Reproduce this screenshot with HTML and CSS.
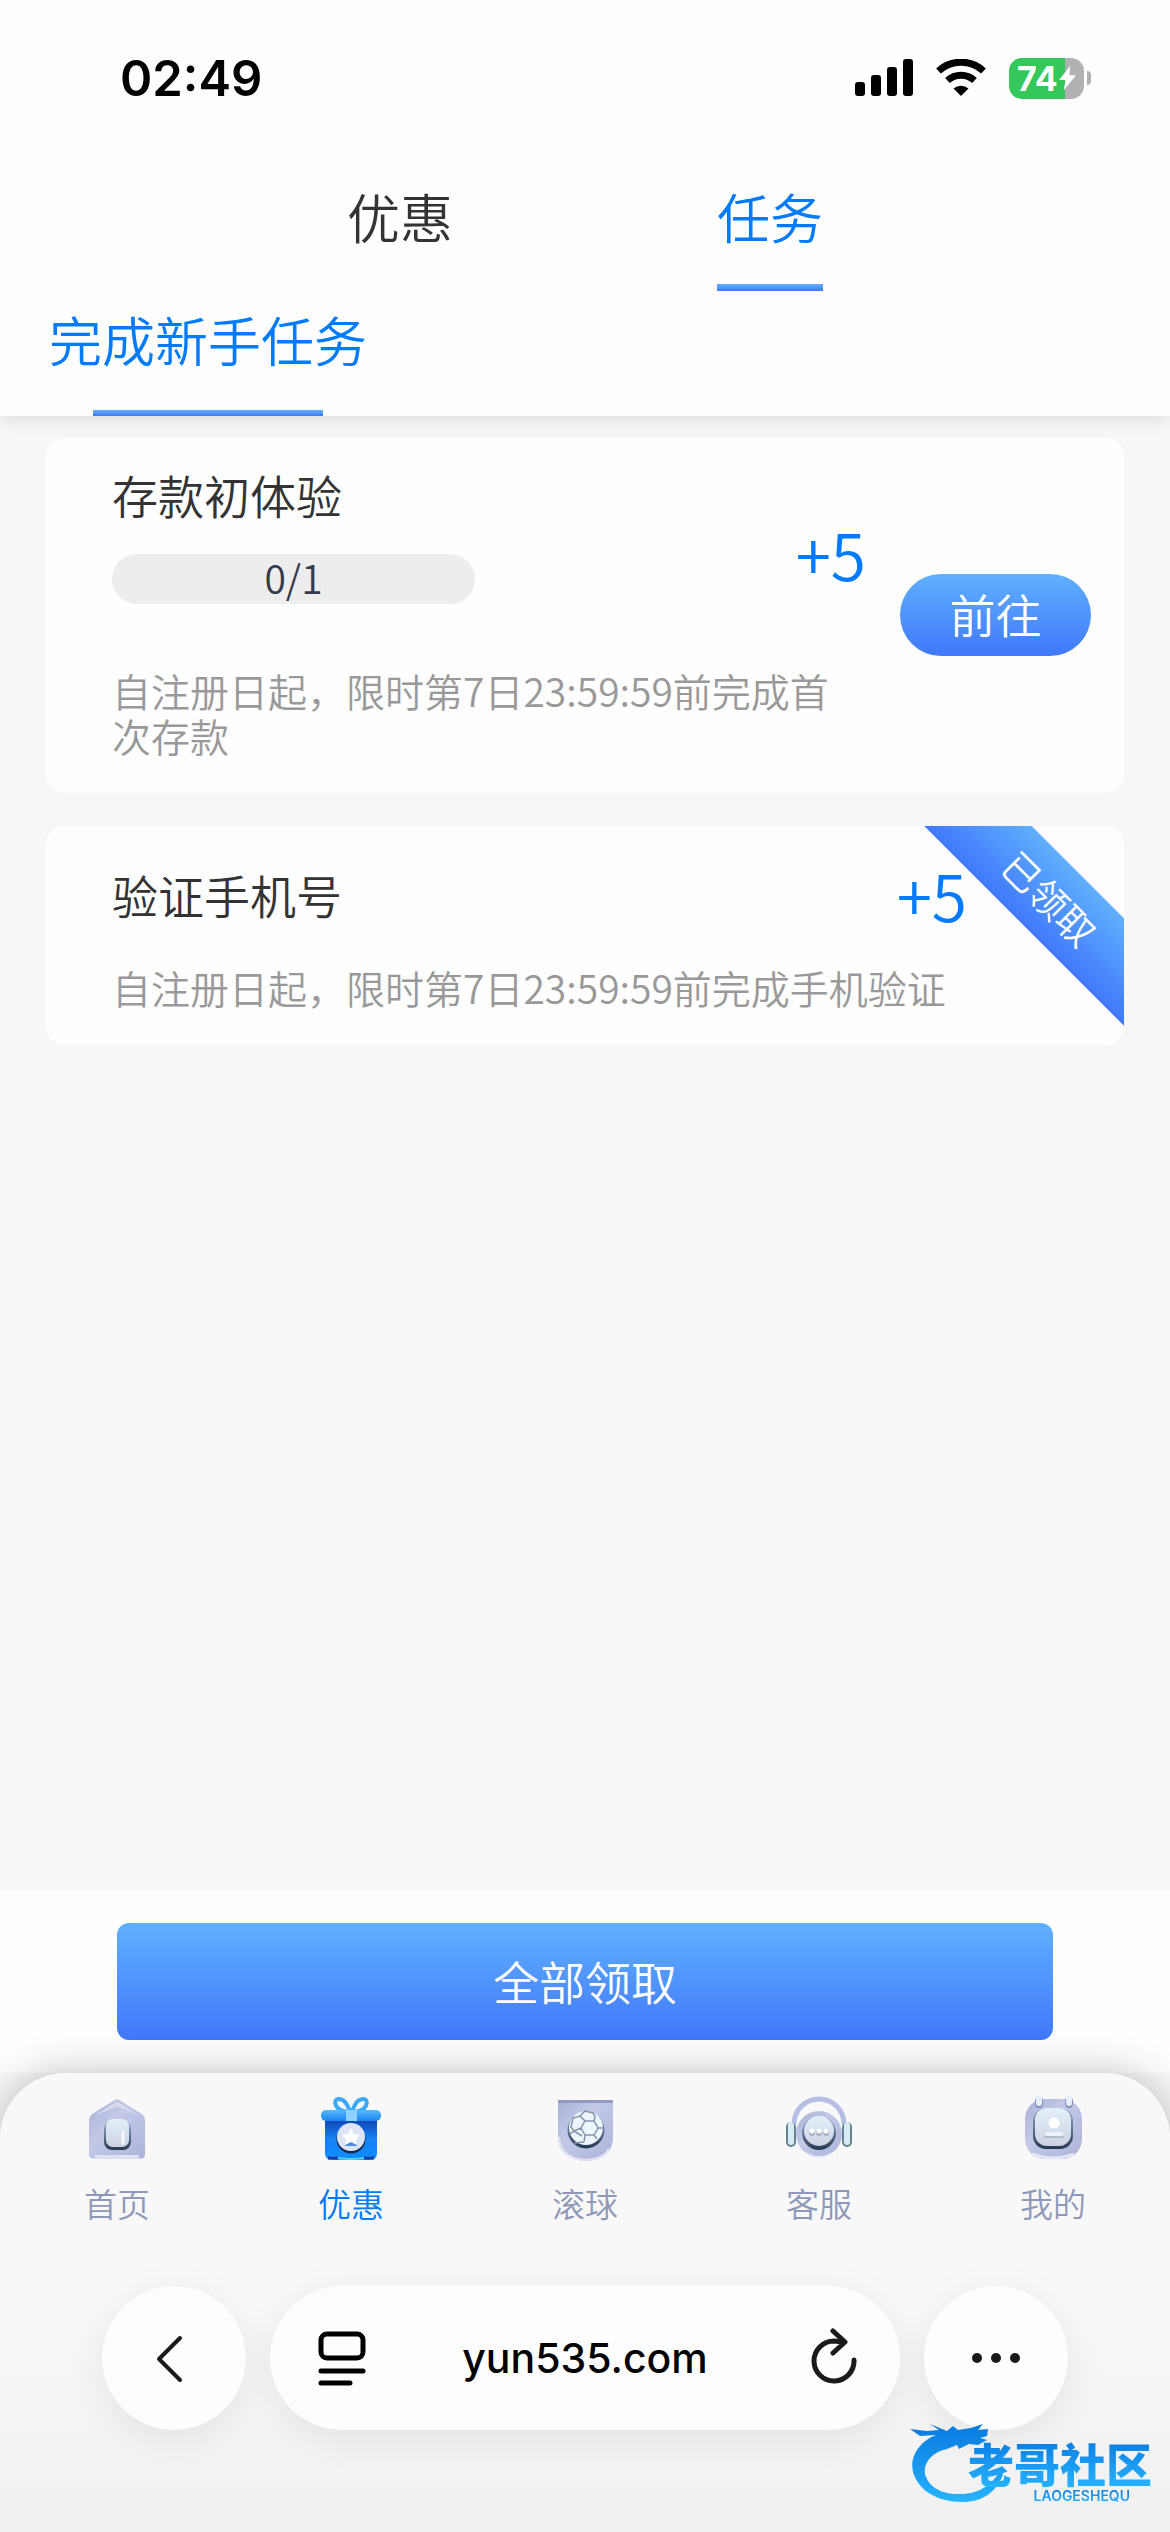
FILE: index.html
```html
<!DOCTYPE html>
<html lang="zh-CN">
<head>
    <meta charset="UTF-8">
    <meta name="viewport" content="width=device-width, initial-scale=1.0">
    <title>任务</title>
    <link rel="stylesheet" href="styles.css">
</head>
<body>
    <header class="top">
        <div class="status">
            <time class="clock">02:49</time>
            <div class="status-icons">
                <svg class="signal" viewBox="0 0 58 38" aria-hidden="true">
                    <rect x="0" y="23" width="10" height="14" rx="3"/>
                    <rect x="16" y="16" width="10" height="21" rx="3"/>
                    <rect x="32" y="8" width="10" height="29" rx="3"/>
                    <rect x="48" y="0" width="10" height="37" rx="3"/>
                </svg>
                <svg class="wifi" viewBox="0 0 52 38" aria-hidden="true">
                    <path d="M26 37l-7.500-7.500a11.500 11.500 0 0 1 15 0z"/>
                    <path d="M12.500 21.500a20 20 0 0 1 27 0M3.500 12a33 33 0 0 1 45 0" fill="none" stroke="#000" stroke-width="7"/>
                </svg>
                <div class="battery">
                    <span class="battery-level">74</span>
                    <svg class="bolt" viewBox="0 0 18 26" aria-hidden="true"><path d="M12 0L0 15h7L5 26 18 10h-7z"/></svg>
                    <span class="battery-tip"></span>
                </div>
            </div>
        </div>
        <nav class="tabs">
            <a class="tab" href="#offers">优惠</a>
            <a class="tab active" href="#tasks">任务</a>
        </nav>
        <nav class="subtabs">
            <a class="subtab" href="#newbie">完成新手任务</a>
        </nav>
    </header>

    <main class="tasks">
        <article class="card card-progress">
            <div class="info">
                <div class="info-head">
                    <div>
                        <h2>存款初体验</h2>
                        <div class="progress">0/1</div>
                    </div>
                    <strong class="reward">+5</strong>
                </div>
                <p>自注册日起，限时第7日23:59:59前完成首次存款</p>
            </div>
            <button class="go" type="button">前往</button>
        </article>
        <article class="card card-done">
            <div class="row">
                <h2>验证手机号</h2>
                <strong class="reward">+5</strong>
            </div>
            <p>自注册日起，限时第7日23:59:59前完成手机验证</p>
            <span class="ribbon">已领取</span>
        </article>
    </main>

    <div class="claim">
        <button class="claim-all" type="button">全部领取</button>
    </div>

    <footer class="bottom">
        <nav class="menu">
            <a href="#home">
                <svg viewBox="0 0 70 70" aria-hidden="true">
                    <defs>
                        <linearGradient id="body" x1="0" y1="0" x2="1" y2="1">
                            <stop offset="0" stop-color="#a9b0d6"/>
                            <stop offset=".4" stop-color="#c3c9e6"/>
                            <stop offset="1" stop-color="#adb2dc"/>
                        </linearGradient>
                        <linearGradient id="glass" x1="0" y1="0" x2="0" y2="1">
                            <stop offset="0" stop-color="#e4f0f9"/>
                            <stop offset="1" stop-color="#ccd2e2"/>
                        </linearGradient>
                        <linearGradient id="edge" x1="0" y1="0" x2="0" y2="1">
                            <stop offset="0" stop-color="#a3b0cf"/>
                            <stop offset="1" stop-color="#26384f"/>
                        </linearGradient>
                        <linearGradient id="blue" x1="0" y1="0" x2="0" y2="1">
                            <stop offset="0" stop-color="#1243b4"/>
                            <stop offset=".5" stop-color="#1683f4"/>
                            <stop offset="1" stop-color="#0d8dff"/>
                        </linearGradient>
                        <linearGradient id="lid" x1="0" y1="0" x2="0" y2="1">
                            <stop offset="0" stop-color="#54baff"/>
                            <stop offset="1" stop-color="#1c86f2"/>
                        </linearGradient>
                    </defs>
                    <path d="M32 5.500q3-2 6 0l21 13q4 2.500 4 7v34q0 4-4 4H11q-4 0-4-4v-34q0-4.500 4-7z" fill="url(#body)"/>
                    <path d="M33 7.500q2-1.500 4 0l20 13-22-9-22 9z" fill="#d5daef"/>
                    <path d="M13 61.500h44" stroke="#dfe2f2" stroke-width="3"/>
                    <rect x="22" y="26" width="27" height="29" rx="8" fill="url(#edge)"/>
                    <rect x="24" y="24" width="23" height="28" rx="7" fill="url(#glass)"/>
                    <path d="M41 37v11" stroke="#f5f8fd" stroke-width="3" stroke-linecap="round"/>
                </svg>
                首页
            </a>
            <a class="active" href="#offers">
                <svg viewBox="0 0 70 70" aria-hidden="true">
                    <path d="M34 17C18 17 16 4 23 4q7 0 11 13M36 17C52 17 54 4 47 4q-7 0-11 13" fill="none" stroke="#3ba8fa" stroke-width="4"/>
                    <path d="M9 24h52v34q0 7-7 7H16q-7 0-7-7z" fill="url(#blue)"/>
                    <path d="M15 62q20 4 40 0" fill="none" stroke="#52d0ff" stroke-width="2"/>
                    <path d="M12 63h10M48 63h10" stroke="#183ca8" stroke-width="3"/>
                    <rect x="5" y="15" width="60" height="11" rx="5" fill="url(#lid)"/>
                    <path d="M30 15h11v11H30z" fill="#8ed3ff"/>
                    <circle cx="35" cy="44" r="14.500" fill="#16294f"/>
                    <circle cx="35" cy="42" r="14" fill="#dde4f5"/>
                    <path d="M30 47l-1 4h12l-1-4z" fill="#4b91dc"/>
                    <path d="M35 33l3 6 6 1-4 4 1 6-6-3-6 3 1-6-4-4 6-1z" fill="#fff"/>
                </svg>
                优惠
            </a>
            <a href="#live">
                <svg viewBox="0 0 70 70" aria-hidden="true">
                    <path d="M8 5h55v37c0 15-11 24-27 24S8 57 8 42z" fill="url(#body)"/>
                    <path d="M8 5h55v3H8z" fill="#9299c2"/>
                    <path d="M9 42c1 15 11 23 27 23 10 0 19-4 23-11" fill="none" stroke="#e4e6f5" stroke-width="2"/>
                    <circle cx="36" cy="35" r="18.500" fill="url(#edge)"/>
                    <circle cx="36" cy="33" r="17" fill="#edf5fd"/>
                    <path d="M35 26h9l4 7-4 7h-9l-4-7zM35 26l-5-5-7 2-2 9 3 4 7-3M30 21l5-5 8 2 2 4-1 4M48 33h5M44 40l3 4M35 40l-1 7M24 36l-4 3M24 36l8 5M24 48l10-1" fill="none" stroke="#8792ac" stroke-width="1.500"/>
                </svg>
                滚球
            </a>
            <a href="#service">
                <svg viewBox="0 0 70 70" aria-hidden="true">
                    <path d="M10 29a25 25 0 0 1 50 0" fill="none" stroke="#b5bee3" stroke-width="5"/>
                    <circle cx="35" cy="39" r="23" fill="url(#body)"/>
                    <path d="M22 58q13 8 26 0" fill="none" stroke="#e6ebf8" stroke-width="2"/>
                    <rect x="2" y="27" width="10" height="25" rx="5" fill="#638491"/>
                    <rect x="4" y="27" width="6" height="23" rx="3" fill="#d9ebf2"/>
                    <rect x="58" y="27" width="10" height="25" rx="5" fill="#638491"/>
                    <rect x="60" y="27" width="6" height="23" rx="3" fill="#d9ebf2"/>
                    <circle cx="35" cy="38" r="17" fill="url(#edge)"/>
                    <circle cx="35" cy="36" r="15" fill="url(#glass)"/>
                    <path d="M28 38h.1M35 38h.1M42 38h.1" stroke="#a9b2c3" stroke-width="6" stroke-linecap="round"/>
                    <path d="M28 36h.1M35 36h.1M42 36h.1" stroke="#fff" stroke-width="5" stroke-linecap="round"/>
                </svg>
                客服
            </a>
            <a href="#me">
                <svg viewBox="0 0 70 70" aria-hidden="true">
                    <rect x="7" y="4" width="57" height="60" rx="20" fill="url(#body)"/>
                    <path d="M14 59q21 8 42 0" fill="none" stroke="#e3e7f6" stroke-width="3"/>
                    <rect x="15" y="13" width="40" height="41" rx="13" fill="url(#edge)"/>
                    <rect x="17" y="13" width="36" height="38" rx="12" fill="url(#glass)"/>
                    <path d="M27 42q8-8 17 0z" fill="#b2bccb" stroke="#b2bccb" stroke-width="2"/>
                    <path d="M29 39h14" stroke="#edf2fb" stroke-width="4" stroke-linecap="round"/>
                    <circle cx="36" cy="28" r="5.500" fill="#fff"/>
                    <rect x="17" y="2" width="8" height="11" rx="4" fill="#8691bd"/>
                    <rect x="18" y="1" width="6" height="10" rx="3" fill="#e6f0fb"/>
                    <rect x="47" y="2" width="8" height="11" rx="4" fill="#8691bd"/>
                    <rect x="48" y="1" width="6" height="10" rx="3" fill="#e6f0fb"/>
                </svg>
                我的
            </a>
        </nav>
        <div class="browser">
            <button class="round" type="button" aria-label="Back">
                <svg viewBox="0 0 56 60"><path d="M34 10L13 31l21 21" fill="none" stroke="#1a1a1a" stroke-width="4" stroke-linecap="round" stroke-linejoin="round"/></svg>
            </button>
            <div class="address">
                <button class="tool" type="button" aria-label="Page settings">
                    <svg viewBox="0 0 56 60"><g fill="none" stroke="#000" stroke-width="5" stroke-linecap="round"><rect x="11" y="6" width="42" height="24" rx="6"/><path d="M11 43h42M11 55h29"/></g></svg>
                </button>
                <span class="url">yun535.com</span>
                <button class="tool" type="button" aria-label="Reload">
                    <svg viewBox="0 0 56 60"><path d="M50 32a20 20 0 1 1-20-19l10 1M29 3l12 11-12 11" fill="none" stroke="#1a1a1a" stroke-width="5" stroke-linecap="round" stroke-linejoin="round"/></svg>
                </button>
            </div>
            <button class="round" type="button" aria-label="More">
                <svg viewBox="0 0 56 60"><g fill="#1a1a1a"><circle cx="9" cy="30" r="5"/><circle cx="28" cy="30" r="5"/><circle cx="47" cy="30" r="5"/></g></svg>
            </button>
        </div>
        <div class="watermark">
            <svg viewBox="0 0 110 80" aria-hidden="true">
                <defs>
                    <linearGradient id="dragon" x1="0" y1="0" x2="0" y2="1">
                        <stop offset="0" stop-color="#0879e0"/>
                        <stop offset="1" stop-color="#27b4ff"/>
                    </linearGradient>
                </defs>
                <path d="M0 5l17 2 12-1-9-6 17 7 6-5 5 4 13-2 12-4-5 6 10-1-1 7-7 2 7 2-9 5-9-1-10 5-2-4-10 4C23 28 13 38 15 50c4 15 20 21 37 20 21-1 32-12 39-25l2 6C86 68 73 78 52 78 27 78 8 66 3 48-1 31 12 16 26 11L10 12z" fill="url(#dragon)"/>
            </svg>
            <span class="brand">老哥社区</span>
            <span class="brand-en">LAOGESHEQU</span>
        </div>
    </footer>
</body>
</html>
```
FILE: styles.css
```css
* {
    box-sizing: border-box;
}

body {
    margin: 0;
    min-height: 100vh;
    display: flex;
    flex-direction: column;
    background: #f7f7f7;
    color: #333;
    font-family: "Noto Sans CJK SC", sans-serif;
    font-weight: 350;
}

a {
    text-decoration: none;
}

button {
    border: none;
    padding: 0;
    font-family: inherit;
    font-weight: inherit;
    cursor: pointer;
}

svg {
    display: block;
}

h2, p {
    margin: 0;
    font-weight: inherit;
}

h2 {
    font-size: 46px;
    line-height: 64px;
}

p {
    color: #999;
    font-size: 39px;
    line-height: 45px;
}

/* Header */
.top {
    background: #fefefe;
    box-shadow: 0 4px 16px rgba(0, 0, 0, 0.1);
}

.status {
    display: flex;
    align-items: center;
    justify-content: space-between;
    height: 156px;
    padding: 0 79px 0 120px;
}

.clock {
    color: #000;
    font: 600 49px Inter, sans-serif;
}

.status-icons {
    display: flex;
    align-items: center;
    gap: 22px;
}

.signal {
    width: 58px;
    height: 38px;
}

.wifi {
    width: 52px;
    height: 38px;
}

.battery {
    position: relative;
    display: flex;
    align-items: center;
    gap: 1px;
    width: 75px;
    height: 41px;
    margin-right: 7px;
    padding-left: 8px;
    border-radius: 13px;
    background: linear-gradient(to right, #34c759 75%, #b1b1b3 75%);
    color: #fff;
}

.battery-level {
    font: 700 34px Inter, sans-serif;
}

.bolt {
    width: 17px;
    height: 26px;
    fill: #fff;
}

.battery-tip {
    position: absolute;
    right: -7px;
    width: 4px;
    height: 14px;
    border-radius: 0 6px 6px 0;
    background: #b1b1b3;
}

.tabs {
    display: flex;
    justify-content: space-around;
    padding: 0 215px;
}

.tab,
.subtab {
    display: flex;
    flex-direction: column;
    align-items: center;
    color: #333;
    font-size: 53px;
    line-height: 80px;
}

.tab {
    height: 135px;
    padding-top: 20px;
}

.tab.active,
.subtab {
    color: #007aff;
}

.tab.active::after,
.subtab::after {
    content: "";
    width: 100%;
    height: 7px;
    margin-top: auto;
    background: linear-gradient(#60b0ff, #4078fa);
}

.subtabs {
    display: flex;
    padding-left: 49px;
}

.subtab {
    height: 125px;
    padding-top: 8px;
}

.subtab::after {
    width: 230px;
    height: 6px;
}

/* Task cards */
.tasks {
    flex: 1;
    display: flex;
    flex-direction: column;
    gap: 33px;
    padding: 22px 46px;
}

.card {
    border-radius: 18px;
    background: #fefefe;
}

.card-progress {
    display: flex;
    align-items: flex-start;
    padding: 24px 33px 35px 66px;
}

.info {
    flex: 1;
}

.info-head {
    display: flex;
    align-items: center;
    justify-content: space-between;
    margin-bottom: 64px;
    padding-right: 34px;
}

.progress {
    width: 363px;
    height: 50px;
    margin-top: 28px;
    border-radius: 25px;
    background: #ededed;
    color: #333a4d;
    font-size: 39px;
    line-height: 46px;
    text-align: center;
}

.reward {
    color: #007aff;
    font-size: 64px;
    font-weight: 350;
    line-height: 80px;
}

.info .reward {
    padding-top: 40px;
}

.info p {
    max-width: 740px;
}

.go {
    width: 191px;
    height: 82px;
    margin-top: 112px;
    padding-bottom: 4px;
    border-radius: 41px;
    background: linear-gradient(#60b0ff, #4078fa);
    color: #fff;
    font-size: 46px;
}

.card-done {
    position: relative;
    overflow: hidden;
    padding: 28px 33px 35px 66px;
}

.row {
    display: flex;
    align-items: center;
    justify-content: space-between;
    margin-bottom: 31px;
    padding-right: 124px;
}

.ribbon {
    position: absolute;
    top: 34px;
    right: -86px;
    width: 320px;
    background: linear-gradient(#60b0ff, #4078fa);
    color: #fff;
    font-size: 38px;
    line-height: 76px;
    text-align: center;
    transform: rotate(45deg);
}

.claim {
    padding: 33px 10%;
    background: #fefefe;
}

.claim-all {
    width: 100%;
    height: 117px;
    padding-bottom: 4px;
    border-radius: 12px;
    background: linear-gradient(#60b0ff, #4078fa);
    color: #fff;
    font-size: 46px;
}

/* Bottom bars */
.bottom {
    position: relative;
    border-radius: 66px 66px 0 0;
    background: linear-gradient(#f8f8f8 50%, #f0f0f0);
    box-shadow: 0 0 40px rgba(0, 0, 0, 0.25);
}

.menu {
    display: flex;
    padding-top: 22px;
}

.menu a {
    flex: 1;
    display: flex;
    flex-direction: column;
    align-items: center;
    gap: 14px;
    color: #8e98b8;
    font-size: 33px;
    line-height: 48px;
}

.menu a.active {
    color: #007aff;
}

.menu svg {
    width: 70px;
    height: 70px;
}

.browser {
    display: flex;
    gap: 24px;
    padding: 59px 102px 102px;
}

.round,
.address {
    height: 144px;
    border-radius: 72px;
    background: #fdfdfd;
    box-shadow: 0 8px 40px rgba(0, 0, 0, 0.07);
}

.round {
    width: 144px;
}

.round svg,
.tool svg {
    width: 56px;
    height: 60px;
    margin: auto;
}

.address {
    flex: 1;
    display: flex;
    align-items: center;
    justify-content: space-between;
    padding: 0 40px;
}

.tool {
    background: none;
}

.url {
    color: #000;
    font: 500 41px Inter, sans-serif;
}

.watermark {
    position: absolute;
    right: 18px;
    bottom: 28px;
    display: flex;
    flex-direction: column;
    align-items: flex-end;
    width: 242px;
    height: 80px;
    padding-top: 12px;
}

.watermark svg {
    position: absolute;
    top: 0;
    left: 0;
    width: 110px;
    height: 80px;
}

.brand,
.brand-en {
    position: relative;
    background: linear-gradient(#0879e0, #27b4ff);
    background-clip: text;
    color: transparent;
}

.brand {
    font-size: 46px;
    font-weight: 900;
    line-height: 52px;
}

.brand-en {
    padding-right: 22px;
    font: 600 14px/16px Inter, sans-serif;
}
```
